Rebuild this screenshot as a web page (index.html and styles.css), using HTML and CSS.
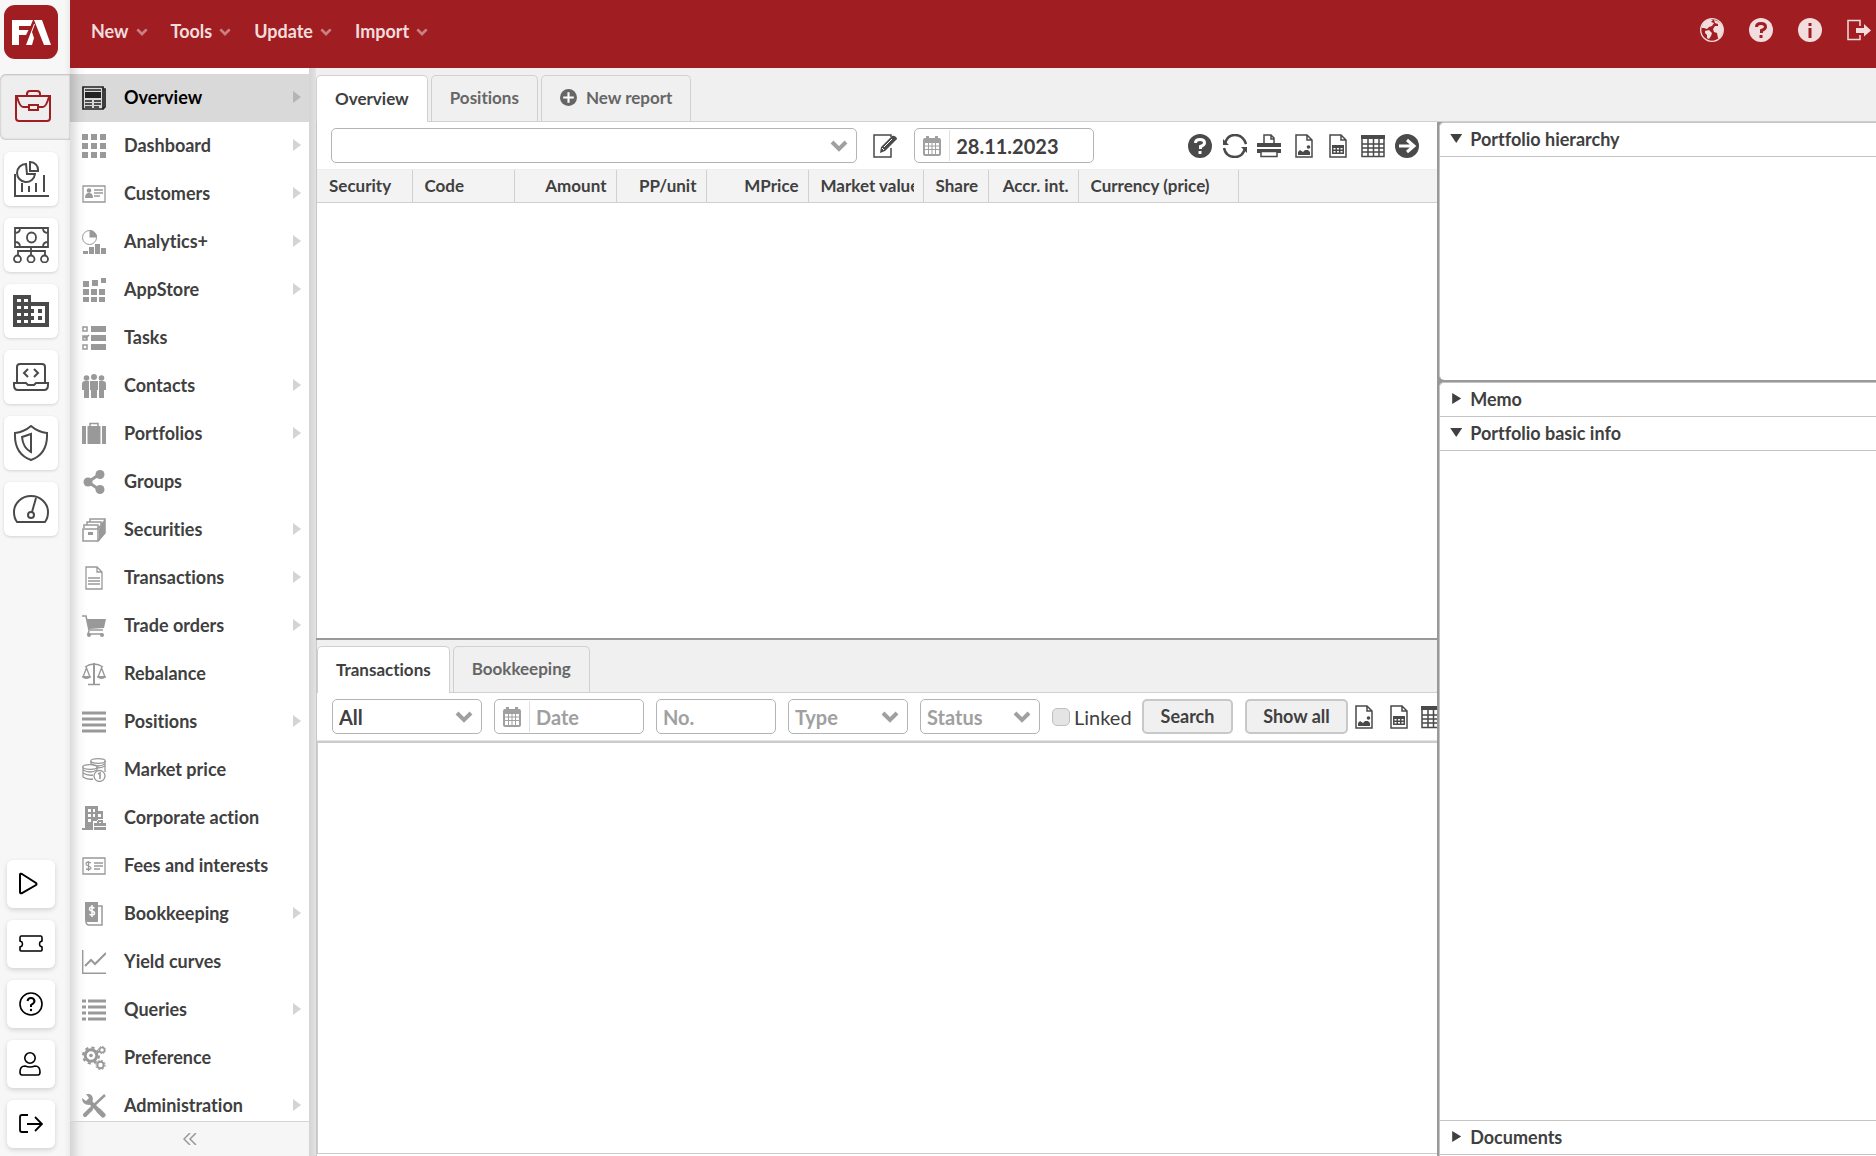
FILE: index.html
```html
<!DOCTYPE html>
<html lang="en">
<head>
<meta charset="utf-8">
<title>Overview</title>
<link rel="stylesheet" href="styles.css">
</head>
<body>
<svg class="sprite" aria-hidden="true">
  <symbol id="chev" viewBox="0 0 18 12"><path d="M2 2l7 7 7-7" fill="none" stroke="currentColor" stroke-width="4"/></symbol>
  <symbol id="cal" viewBox="0 0 20 20"><path fill="currentColor" fill-rule="evenodd" d="M3 2h1V0h3v2h6V0h3v2h1q2 0 2 2v14q0 2-2 2H3q-2 0-2-2V4q0-2 2-2zM3 7v2.500h3V7zm4 0v2.500h2.500V7zm3.500 0v2.500H13V7zM14 7v2.500h3V7zM3 10.500V13h3v-2.500zm4 0V13h2.500v-2.500zm3.500 0V13H13v-2.500zm3.500 0V13h3v-2.500zM3 14v4h3v-4zm4 0v4h2.500v-4zm3.500 0v4H13v-4zm3.500 0v4h3v-4z"/></symbol>
  <symbol id="file-img" viewBox="0 0 24 24"><path d="M4 1h11l5 5v17H4zM15 1v5h5" fill="none" stroke="currentColor" stroke-width="1.500"/><path d="M6 21v-3l2-2 3 2 2-2h3l2 2v3z" fill="currentColor"/><circle cx="16.500" cy="13" r="1.800" fill="currentColor"/></symbol>
  <symbol id="file-sheet" viewBox="0 0 24 24"><path d="M4 1h11l5 5v17H4zM15 1v5h5" fill="none" stroke="currentColor" stroke-width="1.500"/><path fill="currentColor" fill-rule="evenodd" d="M6 11h12v9H6zM7.500 14v1.500h2V14zm3.500 0v1.500h2V14zm3.500 0v1.500h2V14zm-7 3v1.500h2V17zm3.500 0v1.500h2V17zm3.500 0v1.500h2V17z"/></symbol>
  <symbol id="grid" viewBox="0 0 24 24"><path d="M1 2.500h22v20H1zM1 10h22M1 14h22M1 18h22M7 5v17M12.500 5v17M18 5v17" fill="none" stroke="currentColor" stroke-width="1.500"/><path d="M0 1h24v4H0z" fill="currentColor"/></symbol>
</svg>
<div class="app">
  <aside class="rail">
    <a class="logo" href="#" aria-label="FA"><svg viewBox="0 0 54 54"><path fill="#fff" d="M8 15h21l-2.500 6H15v4h9.500L22 30h-7v10H8zM22 40l8-21h1l-3 8 2 6-2 7zM30 15h8l9 25h-7z"/></svg></a>
    <nav class="apps" aria-label="Applications">
      <a class="app-link current" href="#" aria-label="Portfolio management"><svg viewBox="0 0 36 36"><g fill="none" stroke="#a01e22" stroke-width="2"><path d="M1 7h34v22q0 3-3 3H4q-3 0-3-3zM12 7V5q0-3 3-3h7q3 0 3 3v2M2 8q3 10 6 10h6m8 0h6q3 0 6-10M14 16h9v5h-9z"/></g></svg></a>
      <a class="app-link" href="#" aria-label="Analytics"><svg viewBox="0 0 36 36"><g fill="none" stroke="#4a4a4a" stroke-width="2"><path d="M2 13v22h34M9 22v9M16 25v6M23 22v9M31 14v17M13 3a9 9 0 1 0 9 10h-8zM17 1v9h8a8 8 0 0 0-8-9z"/></g></svg></a>
      <a class="app-link" href="#" aria-label="Payments"><svg viewBox="0 0 36 36"><g fill="none" stroke="#4a4a4a" stroke-width="1.800"><path d="M2 1h33v19H2zM2 6q5 0 5-5M35 6q-5 0-5-5M2 15q5 0 5 5M35 15q-5 0-5 5M18 20v8M5 28v-4h27v4"/><ellipse cx="18.500" cy="10.500" rx="4.500" ry="5"/><circle cx="4.500" cy="32" r="3.500"/><circle cx="18" cy="32" r="3.500"/><circle cx="31.500" cy="32" r="3.500"/></g></svg></a>
      <a class="app-link" href="#" aria-label="Back office"><svg viewBox="0 0 36 36"><path fill="#4a4a4a" fill-rule="evenodd" d="M0 2h18v7h18v25H0zM4 6v3h4V6zm7 0v3h4V6zM4 13v3h4v-3zm7 0v3h4v-3zM4 20v3h4v-3zm7 0v3h4v-3zM4 27v3h4v-3zm7 0v3h4v-3zM18 13v3h3v4h-3v3h3v4h-3v3h14V13zm7 3h4v4h-4zm0 7h4v4h-4z"/></svg></a>
      <a class="app-link" href="#" aria-label="Developer"><svg viewBox="0 0 36 36"><g fill="none" stroke="#4a4a4a" stroke-width="2"><path d="M4 24V8q0-3 3-3h22q3 0 3 3v16M1 24h12l2 2h6l2-2h12v2q0 5-4 5H5q-4 0-4-5zM15 10l-4 4 4 4M21 10l4 4-4 4"/></g></svg></a>
      <a class="app-link" href="#" aria-label="Compliance"><svg viewBox="0 0 36 36"><g fill="none" stroke="#4a4a4a" stroke-width="2"><path d="M18 1q7 6 16 7 1 21-16 27Q1 29 2 8q9-1 16-7zM18 9v18q-8-4-9-15z"/></g></svg></a>
      <a class="app-link" href="#" aria-label="Monitoring"><svg viewBox="0 0 36 36"><g fill="none" stroke="#4a4a4a" stroke-width="2"><path d="M4 31q-3-4-3-10a17 16 0 0 1 34 0q0 6-3 10zM19 21l4-14"/><circle cx="18" cy="24" r="3"/></g></svg></a>
    </nav>
    <nav class="util" aria-label="Help and account">
      <a class="util-link" href="#" aria-label="Play"><svg viewBox="0 0 24 24"><path d="M1 3q0-2 2-1l14 9q1 1 0 2L3 21q-2 1-2-1z" fill="none" stroke="#000" stroke-width="2"/></svg></a>
      <a class="util-link" href="#" aria-label="Ticket"><svg viewBox="0 0 24 24"><path d="M1 9V6q0-2 1-2h20q1 0 1 2v3l-2 1q-1 2 0 4l2 1v3q0 1-1 1H2q-1 0-1-1v-3l2-1q1-2 0-4z" fill="none" stroke="#000" stroke-width="1.600"/></svg></a>
      <a class="util-link" href="#" aria-label="Help"><svg viewBox="0 0 24 24"><g fill="none" stroke="#000" stroke-width="1.600"><circle cx="12" cy="12" r="11"/><path d="M8.500 9q.5-3 3.500-3t3.500 3q0 2-3.500 4v2" stroke-width="2"/></g><circle cx="12" cy="18" r="1.200"/></svg></a>
      <a class="util-link" href="#" aria-label="Profile"><svg viewBox="0 0 24 24"><g fill="none" stroke="#000" stroke-width="1.600"><circle cx="11" cy="6" r="5.200"/><path d="M6 14q5 2 10 0 5 0 5 6 0 3-2 3H3q-2 0-2-3 0-6 5-6z"/></g></svg></a>
      <a class="util-link" href="#" aria-label="Sign out"><svg viewBox="0 0 24 24"><path d="M9 3H3Q1 3 1 5v13q0 2 2 2h6M8 12h15M16 5l7 7-7 7" fill="none" stroke="#000" stroke-width="1.800"/></svg></a>
    </nav>
  </aside>

  <header class="topbar">
    <nav class="menus" aria-label="Main menu">
      <button class="menu">New <svg><use href="#chev"/></svg></button>
      <button class="menu">Tools <svg><use href="#chev"/></svg></button>
      <button class="menu">Update <svg><use href="#chev"/></svg></button>
      <button class="menu">Import <svg><use href="#chev"/></svg></button>
    </nav>
    <div class="top-icons">
      <button aria-label="Language"><svg viewBox="0 0 24 24"><circle cx="12" cy="12" r="11.300" fill="none" stroke="currentColor" stroke-width="1.300"/><path fill="currentColor" d="M2 8Q4 2 10 1l3 1-2 2 3 1-2 3-3 1-2 2-3-1-2 0zM5 13l4-1 3 3-1 3-2 3-2-1 0-3-2-2zM14 2q7 1 9 8l0 4-3 6-2 0-1-5-3-1-1-3 2-3 3 0 0-2-3-1z"/></svg></button>
      <button aria-label="Help"><svg viewBox="0 0 24 24"><circle cx="12" cy="12" r="12" fill="currentColor"/><path d="M7.500 9q0-3.500 4.500-3.500t4.500 3.500q0 2-4 3.500V15M12 17v3" fill="none" stroke="#a01e22" stroke-width="3"/></svg></button>
      <button aria-label="Information"><svg viewBox="0 0 24 24"><circle cx="12" cy="12" r="12" fill="currentColor"/><path d="M12 5v3M12 10v10" stroke="#a01e22" stroke-width="3"/></svg></button>
      <button aria-label="Log out"><svg viewBox="0 0 24 24"><path d="M13 8V2.500H1v19h12V17" fill="none" stroke="currentColor" stroke-width="1.500"/><path d="M9 10h8V6l7 6.500-7 6V15H9z" fill="currentColor"/></svg></button>
    </div>
  </header>

  <aside class="side">
    <nav class="side-nav" aria-label="Views">
      <a class="side-link active more" href="#"><svg viewBox="0 0 24 24"><path d="M1 1h20v22H1zM21 3h2v18l-2 2" fill="none" stroke="#222" stroke-width="1.700"/><path d="M3 4h16M3 15h7M3 18h7M3 21h7M12 15h7M12 18h7M12 21h5" stroke="#222" stroke-width="1.300"/><path d="M3 6h16v6H3z" fill="#222"/></svg>Overview</a>
      <a class="side-link more" href="#"><svg viewBox="0 0 24 24"><path d="M0 3h24M0 12h24M0 21h24" fill="none" stroke="#999" stroke-width="6" stroke-dasharray="6 3"/></svg>Dashboard</a>
      <a class="side-link more" href="#"><svg viewBox="0 0 24 24"><path d="M1 4h22v16H1zM12 8h9M12 11h9M12 14h6" fill="none" stroke="#999" stroke-width="1.300"/><circle cx="7" cy="8.500" r="2.300" fill="#999"/><path d="M3 16q0-5 4-5t4 5z" fill="#999"/></svg>Customers</a>
      <a class="side-link more" href="#"><svg viewBox="0 0 24 24"><circle cx="7.500" cy="7.500" r="7" fill="none" stroke="#999"/><path d="M7.500 0a7.500 7.500 0 0 1 7.500 7.500H7.500zM1 21h5v3H1zM7 17h5v7H7zM13 14h5v10h-5zM19 18h5v6h-5z" fill="#999"/></svg>Analytics+</a>
      <a class="side-link more" href="#"><svg viewBox="0 0 24 24"><path fill="#999" d="M1 3h6v6H1zM10 2h6v6h-6zM19 0h5v5h-5zM1 11h6v6H1zM9 11h6v6H9zM17 11h6v6h-6zM1 19h6v5H1zM9 19h6v5H9zM17 19h6v5h-6z"/></svg>AppStore</a>
      <a class="side-link" href="#"><svg viewBox="0 0 24 24"><path d="M9 0h15v6H9zM9 9h15v6H9zM9 18h15v6H9z" fill="#999"/><path d="M1 1h4v4H1zM1 10h4v4H1zM1 19h4v4H1zM2 11l2 1 3-3" fill="none" stroke="#999" stroke-width="1.500"/></svg>Tasks</a>
      <a class="side-link more" href="#"><svg viewBox="0 0 24 24"><g fill="#999"><circle cx="4.500" cy="4" r="2.800"/><circle cx="19.500" cy="4" r="2.800"/><circle cx="12" cy="3" r="3"/><path d="M8 7h8v9h-1v8H9v-8H8zM0 10q0-3 3-3h4v17H2v-8H0zM24 10q0-3-3-3h-4v17h5v-8h2z"/></g></svg>Contacts</a>
      <a class="side-link more" href="#"><svg viewBox="0 0 24 24"><path d="M0 4h4v18H0zM5.500 4h13v18h-13zM20 4h4v18h-4z" fill="#999"/><path d="M8 4V1.500h8V4" fill="none" stroke="#999" stroke-width="1.500"/></svg>Portfolios</a>
      <a class="side-link" href="#"><svg viewBox="0 0 24 24"><path d="M18 4L6 12l12 8" fill="none" stroke="#999" stroke-width="3"/><g fill="#999"><circle cx="18" cy="4.500" r="4.500"/><circle cx="6" cy="12" r="4.500"/><circle cx="18" cy="19.500" r="4.500"/></g></svg>Groups</a>
      <a class="side-link more" href="#"><svg viewBox="0 0 24 24"><path d="M1 11h15v12H1zM2 10V7h14v4M5 7V4h14v5M8 4V1h15v14l-7 8M16 11l7-9" fill="none" stroke="#999" stroke-width="1.500"/><path d="M17 11l6-9v13l-6 8zM6 14h5v3H6z" fill="#999"/></svg>Securities</a>
      <a class="side-link more" href="#"><svg viewBox="0 0 24 24"><path d="M4 1h11l5 5v17H4zM15 1v5h5M6 12h12M6 15h12M6 18h12" fill="none" stroke="#999" stroke-width="1.300"/></svg>Transactions</a>
      <a class="side-link more" href="#"><svg viewBox="0 0 24 24"><path d="M0 2h4l3 14h14M7 17l-1 3h14" fill="none" stroke="#999" stroke-width="1.600"/><path d="M5 5h19l-2 9-15 1z" fill="#999"/><circle cx="7" cy="21" r="2" fill="#999"/><circle cx="20" cy="21" r="2" fill="#999"/></svg>Trade orders</a>
      <a class="side-link" href="#"><svg viewBox="0 0 24 24"><path d="M12 1v21M6 22.500h12M3 5q9-6 18 0M4.500 6L1 15h7zM19.500 6L16 15h7z" fill="none" stroke="#999" stroke-width="1.400"/><path d="M0 14h9q-1 3-4.500 3T0 14zM15 14h9q-1 3-4.500 3T15 14zM11 1h2v21h-2z" fill="#999"/></svg>Rebalance</a>
      <a class="side-link more" href="#"><svg viewBox="0 0 24 24"><path d="M0 3h24M0 9h24M0 15h24M0 21h24" stroke="#999" stroke-width="3"/></svg>Positions</a>
      <a class="side-link" href="#"><svg viewBox="0 0 24 24"><g fill="none" stroke="#999" stroke-width="1.300"><ellipse cx="16" cy="3" rx="7.300" ry="2.300"/><ellipse cx="8" cy="9" rx="7.300" ry="2.300"/><path d="M9 3v3M23 3v11M9 6q7 4 14 0M15 10q5 0 8-2M1 9v10q4 3 10 2M1 12q7 4 14 0M1 15q5 3 10 2M1 18M15 9v3"/><circle cx="17.500" cy="18" r="5.500"/><path d="M16 16l2-1v6" stroke-width="1.600"/></g></svg>Market price</a>
      <a class="side-link" href="#"><svg viewBox="0 0 24 24"><path fill="#999" fill-rule="evenodd" d="M3 0h13v5h5v8h-5v2h-5v9H0v-2h3zM6 3v3h3V3zm5 0v3h2V3zM6 8v3h3V8zm5 0v3h2V8zm5 0v3h3V8zM6 13v3h3v-3zM12 17h3v-3h6v3h3v3H12zm5-1v1h2v-1zM12 21h12v3H12z"/></svg>Corporate action</a>
      <a class="side-link" href="#"><svg viewBox="0 0 24 24"><path d="M1 4h22v16H1zM12 9h9M12 12h9M12 15h6M9 9q-5-2-5 1 0 1 2.500 2T9 14q0 2-5 1M6.500 7v10" fill="none" stroke="#999" stroke-width="1.300"/></svg>Fees and interests</a>
      <a class="side-link more" href="#"><svg viewBox="0 0 24 24"><path d="M3 0h13v20H6q-3 0-3-2z" fill="#999"/><path d="M4 19q0 4 3 4h13V4h-4" fill="none" stroke="#999" stroke-width="1.500"/><path d="M12.500 6q-5-2-5 1 0 1.500 2.500 2t2.500 2.500q0 2-5 1M10 3v12" fill="none" stroke="#fff" stroke-width="1.500"/></svg>Bookkeeping</a>
      <a class="side-link" href="#"><svg viewBox="0 0 24 24"><path d="M.7 0v23.300H24" fill="none" stroke="#999" stroke-width="1.400"/><path d="M3 16l6-6 4 4L24 3" fill="none" stroke="#999" stroke-width="2"/></svg>Yield curves</a>
      <a class="side-link more" href="#"><svg viewBox="0 0 24 24"><path d="M0 3h4M6 3h18M0 9h4M6 9h18M0 15h4M6 15h18M0 21h4M6 21h18" stroke="#999" stroke-width="3"/></svg>Queries</a>
      <a class="side-link" href="#"><svg viewBox="0 0 24 24"><g fill="none" stroke="#999"><circle cx="9" cy="9.500" r="5.800" stroke-width="3"/><circle cx="9" cy="9.500" r="8" stroke-width="2" stroke-dasharray="3.200 3.100"/><circle cx="20" cy="4" r="2.500" stroke-width="1.500"/><circle cx="20" cy="4" r="3.600" stroke-dasharray="1.500 1.300"/><circle cx="18.500" cy="19" r="3.200" stroke-width="2"/><circle cx="18.500" cy="19" r="4.700" stroke-dasharray="1.900 1.800"/></g><circle cx="9" cy="9.500" r="1.800" fill="#999"/></svg>Preference</a>
      <a class="side-link more" href="#"><svg viewBox="0 0 24 24"><path d="M7 7l10 10" stroke="#999" stroke-width="4"/><path d="M17 17l4 4" stroke="#999" stroke-width="5" stroke-linecap="round"/><path d="M0 4l4 3 3-3-3-4q6-1 7 5l-1 4-3 2Q0 11 0 4z" fill="#999"/><path d="M23 1L9 14" stroke="#999" stroke-width="2.500"/><path d="M9 15l-6 6" stroke="#999" stroke-width="4" stroke-linecap="round"/></svg>Administration</a>
    </nav>
    <button class="collapse" aria-label="Collapse menu"><svg viewBox="0 0 14 12"><path d="M7 0L1 6l6 6M13 0L7 6l6 6" fill="none" stroke="#999" stroke-width="1.500"/></svg></button>
  </aside>

  <main class="main">
    <div class="tabs" role="tablist">
      <button class="tab selected" role="tab">Overview</button>
      <button class="tab" role="tab">Positions</button>
      <button class="tab" role="tab"><svg class="plus" viewBox="0 0 16 16"><circle cx="8" cy="8" r="8" fill="#666"/><path d="M8 3v10M3 8h10" stroke="#fff" stroke-width="2"/></svg>New report</button>
    </div>
    <div class="work">
      <div class="left">
        <section class="pane">
          <div class="toolbar">
            <div class="drop wide"><select aria-label="Portfolio"><option></option></select><svg><use href="#chev"/></svg></div>
            <button class="icon" aria-label="Edit"><svg viewBox="0 0 24 24"><path d="M18 3V1H1v22h17v-9" fill="none" stroke="#4a4a4a" stroke-width="1.500"/><path d="M7 19l1-6L19 2q2-1 4 1t0 3L12 17z" fill="#4a4a4a"/><path d="M9 14l2 2M11 13l8-8" stroke="#fff"/></svg></button>
            <label class="date main-date"><svg><use href="#cal"/></svg><input type="text" aria-label="Report date" value="28.11.2023"></label>
            <div class="actions">
              <button class="icon" aria-label="Help"><svg viewBox="0 0 24 24"><circle cx="12" cy="12" r="12" fill="#4a4a4a"/><path d="M7.500 9q0-3.500 4.500-3.500t4.500 3.500q0 2-4 3.500V15M12 17v3" fill="none" stroke="#fff" stroke-width="3"/></svg></button>
              <button class="icon" aria-label="Refresh"><svg viewBox="0 0 24 24"><path d="M2 10q2-9 10-9t11 9M1 14q2 9 11 9 8 0 10-9" fill="none" stroke="#4a4a4a" stroke-width="2.500"/><path d="M0 5v6h6zM24 19v-6h-6z" fill="#4a4a4a"/></svg></button>
              <button class="icon" aria-label="Print"><svg viewBox="0 0 24 24"><path d="M7 9V1h7l3 3v5M14 1v4h3M4 17.500h16v5H4z" fill="none" stroke="#4a4a4a" stroke-width="1.500"/><path d="M0 9h24v4H0zM0 15h24v4h-4v-2H4v2H0z" fill="#4a4a4a"/></svg></button>
              <button class="icon" aria-label="Export image"><svg><use href="#file-img"/></svg></button>
              <button class="icon" aria-label="Export sheet"><svg><use href="#file-sheet"/></svg></button>
              <button class="icon" aria-label="Table"><svg><use href="#grid"/></svg></button>
              <button class="icon" aria-label="Next"><svg viewBox="0 0 24 24"><circle cx="12" cy="12" r="12" fill="#4a4a4a"/><path d="M4 12h14M12 6l7 6-7 6" fill="none" stroke="#fff" stroke-width="3"/></svg></button>
            </div>
          </div>
          <table class="positions">
            <colgroup><col class="c95"><col class="c102"><col class="c102"><col class="c90"><col class="c102"><col class="c115"><col class="c65"><col class="c90"><col class="c160"><col></colgroup>
            <thead><tr><th>Security</th><th>Code</th><th class="num">Amount</th><th class="num">PP/unit</th><th class="num">MPrice</th><th><span class="clip">Market value</span></th><th>Share</th><th class="num">Accr. int.</th><th>Currency (price)</th><td></td></tr></thead>
          </table>
        </section>
        <section class="pane">
          <div class="tabs lower" role="tablist">
            <button class="tab selected" role="tab">Transactions</button>
            <button class="tab" role="tab">Bookkeeping</button>
          </div>
          <div class="toolbar filters">
            <div class="drop w150"><select class="set" aria-label="Scope"><option>All</option></select><svg><use href="#chev"/></svg></div>
            <label class="date w150"><svg><use href="#cal"/></svg><input type="text" aria-label="Date" placeholder="Date"></label>
            <input class="box w120" type="text" aria-label="Number" placeholder="No.">
            <div class="drop w120"><select aria-label="Type"><option>Type</option></select><svg><use href="#chev"/></svg></div>
            <div class="drop w120"><select aria-label="Status"><option>Status</option></select><svg><use href="#chev"/></svg></div>
            <label class="check"><input type="checkbox">Linked</label>
            <button class="btn search">Search</button>
            <button class="btn show">Show all</button>
            <div class="actions near">
              <button class="icon" aria-label="Export image"><svg><use href="#file-img"/></svg></button>
              <button class="icon" aria-label="Export sheet"><svg><use href="#file-sheet"/></svg></button>
              <button class="icon" aria-label="Table"><svg><use href="#grid"/></svg></button>
            </div>
          </div>
          <div class="list"></div>
        </section>
      </div>
      <div class="right">
        <details class="box-panel" open><summary>Portfolio hierarchy</summary></details>
        <div class="stack">
          <details><summary>Memo</summary></details>
          <details class="fill" open><summary>Portfolio basic info</summary></details>
          <details class="docs"><summary>Documents</summary></details>
        </div>
      </div>
    </div>
  </main>
</div>
</body>
</html>
```
FILE: styles.css
```css
* { box-sizing: border-box; }
body {
  margin: 0;
  font-family: Lato, "Liberation Sans", sans-serif;
  font-size: 18px;
  font-weight: 700;
  font-variant-ligatures: none;
  color: #404040;
  background: #fff;
}
button, input, select { font: inherit; font-variant-ligatures: none; color: inherit; margin: 0; }
button { padding: 0; border: 0; background: none; }
a { color: inherit; text-decoration: none; }
svg { display: block; }
.sprite { display: none; }

.app {
  display: grid;
  grid-template: 68px minmax(0, 1fr) / 70px 239px minmax(0, 1fr);
  height: 100vh;
  overflow: hidden;
}

/* Application rail */
.rail {
  grid-row: 1 / 3;
  display: flex;
  flex-direction: column;
  padding: 5px 0 8px;
  background: linear-gradient(to right, #f7f7f7 64px, #ececec);
}
.logo { width: 54px; height: 54px; margin-left: 4px; border-radius: 11px; background: #a01e22; }
.apps { display: flex; flex-direction: column; gap: 12px; padding-top: 15px; }
.app-link {
  display: grid;
  place-items: center;
  width: 54px;
  height: 54px;
  margin-left: 4px;
  border-radius: 6px;
  background: #fff;
  box-shadow: 0 1px 3px #00000026;
}
.app-link svg { width: 36px; height: 36px; }
.app-link.current {
  width: 70px;
  height: 66px;
  margin: 0;
  padding-right: 4px;
  border-radius: 6px 0 0 6px;
  background: #eee;
  box-shadow: inset 0 1px 2px #00000033, inset 0 -1px 2px #00000026;
}
.util { display: flex; flex-direction: column; gap: 12px; margin-top: auto; padding-left: 7px; }
.util-link {
  display: grid;
  place-items: center;
  width: 48px;
  height: 48px;
  border-radius: 6px;
  background: #fff;
  box-shadow: 0 2px 5px #00000026;
}
.util-link svg { width: 24px; height: 24px; }

/* Top bar */
.topbar {
  grid-column: 2 / 4;
  display: flex;
  justify-content: space-between;
  padding: 0 5px 0 21px;
  color: #f3dcdd;
  background: #a01e22;
}
.menus { display: flex; gap: 23px; height: 61px; }
.menu { display: flex; align-items: center; gap: 7px; }
.menu svg { width: 12px; height: 8px; margin-top: 3px; color: #c98083; }
.top-icons { display: flex; gap: 25px; height: 59px; }
.top-icons svg { width: 24px; height: 24px; }

/* View list */
.side {
  display: flex;
  flex-direction: column;
  background: linear-gradient(to right, #00000024, #00000008 9px, transparent 16px), #fff;
}
.side-nav { flex: 1; min-height: 0; padding-top: 6px; overflow: hidden; }
.side-link { display: flex; align-items: center; gap: 18px; height: 48px; padding: 0 8px 2px 12px; }
.side-link svg { flex: none; width: 24px; height: 24px; margin-top: 2px; }
.side-link.more::after {
  content: "";
  margin-left: auto;
  border: solid transparent;
  border-width: 6px 0 6px 8px;
  border-left-color: #d4d4d4;
}
.side-link.active { color: #000; background: #00000026; }
.side-link.active::after { border-left-color: #b4b4b4; }
.collapse {
  display: grid;
  place-items: center;
  flex: none;
  height: 35px;
  border-top: 1px solid #d4d4d4;
  background: #00000009;
}
.collapse svg { width: 14px; height: 12px; }

/* Work area */
.main {
  display: flex;
  flex-direction: column;
  padding-left: 7px;
  background: linear-gradient(to right, #d4d4d4, #e2e2e2 7px, #f0f0f0 7px);
}
.tabs {
  display: flex;
  flex: none;
  align-items: flex-end;
  gap: 3px;
  height: 54px;
  border-bottom: 1px solid #d0d0d0;
  background: #f0f0f0;
}
.tab {
  display: flex;
  align-items: center;
  gap: 9px;
  height: 46px;
  padding: 0 18px 2px;
  border: 1px solid #d0d0d0;
  border-bottom: 0;
  border-radius: 5px 5px 0 0;
  font-size: 17px;
  color: #666;
}
.tab.selected { height: 47px; margin-bottom: -1px; color: #404040; background: #fff; }
.plus { width: 17px; height: 17px; }
.tabs.lower { height: 53px; }
.work {
  flex: 1;
  min-height: 0;
  display: grid;
  grid-template-columns: minmax(0, 1fr) 28%;
}
.left {
  display: grid;
  grid-template-rows: minmax(0, 1fr) minmax(0, 1fr);
  gap: 2px;
  min-width: 0;
  border-right: 2px solid #999;
  background: #999;
}
.pane {
  display: flex;
  flex-direction: column;
  min-width: 0;
  overflow: hidden;
  border-left: 1px solid #c8c8c8;
  background: #fff;
}
.toolbar { display: flex; align-items: center; flex: none; height: 47px; padding: 0 18px 0 14px; }
.drop { display: grid; align-items: center; flex: none; }
.drop > * { grid-area: 1 / 1; }
.drop svg { justify-self: end; width: 18px; height: 12px; margin-right: 9px; color: #a0a0a0; pointer-events: none; }
.drop select, .box, .date {
  width: 100%;
  height: 35px;
  border: 1px solid #b4b4b4;
  border-radius: 5px;
  background: #fff;
}
.drop select { padding: 0 6px; appearance: none; color: #a0a0a0; }
.drop select.set { color: #404040; }
.box { padding: 0 6px; }
.date { display: flex; align-items: center; flex: none; padding: 1px 0; overflow: hidden; }
.date svg { flex: none; width: 20px; height: 20px; margin: 0 7px; color: #a0a0a0; }
.date input { width: 100%; min-width: 0; height: 31px; padding: 0 6px; border: 0; border-left: 1px solid #e0e0e0; background: none; }
::placeholder { color: #a0a0a0; opacity: 1; }
.drop.wide { flex: 1; margin-right: 16px; }
.main-date { width: 180px; margin: 0 94px 0 17px; font-size: 20px; }
.icon svg { width: 24px; height: 24px; color: #4a4a4a; }
.actions { display: flex; flex: none; justify-content: space-between; width: 231px; }
.actions.near { width: 93px; margin-left: -8px; }
.filters { gap: 12px; height: 48px; border-bottom: 1px solid #e4e4e4; font-size: 20px; padding: 0 0 0 15px; }
.w150.w150 { width: 150px; }
.w120.w120 { width: 120px; flex: none; }
.check { display: flex; align-items: center; flex: none; gap: 4px; width: 78px; font-weight: 400; }
.check input { flex: none; width: 18px; height: 18px; appearance: none; border: 1px solid #c0c0c0; border-radius: 5px; background: #e4e4e4; }
.btn { flex: none; height: 35px; padding-bottom: 2px; border: 2px solid #c8c8c8; border-radius: 5px; background: #f0f0f0; font-size: 18px; }
.search { width: 91px; }
.show { width: 103px; }
.list { flex: 1; margin-bottom: 2px; border: solid #ccc; border-width: 2px 0 1px 1px; }

.positions { width: 100%; border-collapse: collapse; table-layout: fixed; font-size: 17px; }
.positions tr { height: 33px; background: #f3f3f3; }
.positions th, .positions td { padding: 0 9px 2px 12px; border: solid #d0d0d0; border-width: 1px 0 1px 1px; border-top-color: #eee; text-align: left; white-space: nowrap; }
.positions th:first-child { border-left: 0; }
.positions .num { text-align: right; }
.clip { display: block; overflow: hidden; }
.c65 { width: 65px; }
.c90 { width: 90px; }
.c95 { width: 95px; }
.c102 { width: 102px; }
.c115 { width: 115px; }
.c160 { width: 160px; }

/* Portfolio panels */
.right { display: grid; grid-template-rows: minmax(0, 1fr) minmax(0, 3fr); gap: 2px; background: #999; }
.box-panel, .stack { border-left: 1px solid #c4c4c4; border-top: 1px solid #c4c4c4; background: #fff; }
.box-panel { border-radius: 5px 0 0 5px; }
.stack { display: flex; flex-direction: column; border-radius: 5px 0 0 0; }
.fill { flex: 1; }
summary {
  display: flex;
  align-items: center;
  gap: 9px;
  height: 34px;
  padding: 0 0 2px 12px;
  border-bottom: 1px solid #c4c4c4;
  list-style: none;
}
summary::before { content: ""; width: 9px; height: 11px; background: #404040; clip-path: polygon(0 0, 100% 50%, 0 100%); }
details[open] > summary { padding-left: 10px; gap: 8px; }
details[open] > summary::before { width: 12px; height: 9px; clip-path: polygon(0 0, 100% 0, 50% 100%); }
.docs { margin-bottom: 1px; border-top: 1px solid #c4c4c4; }
```
